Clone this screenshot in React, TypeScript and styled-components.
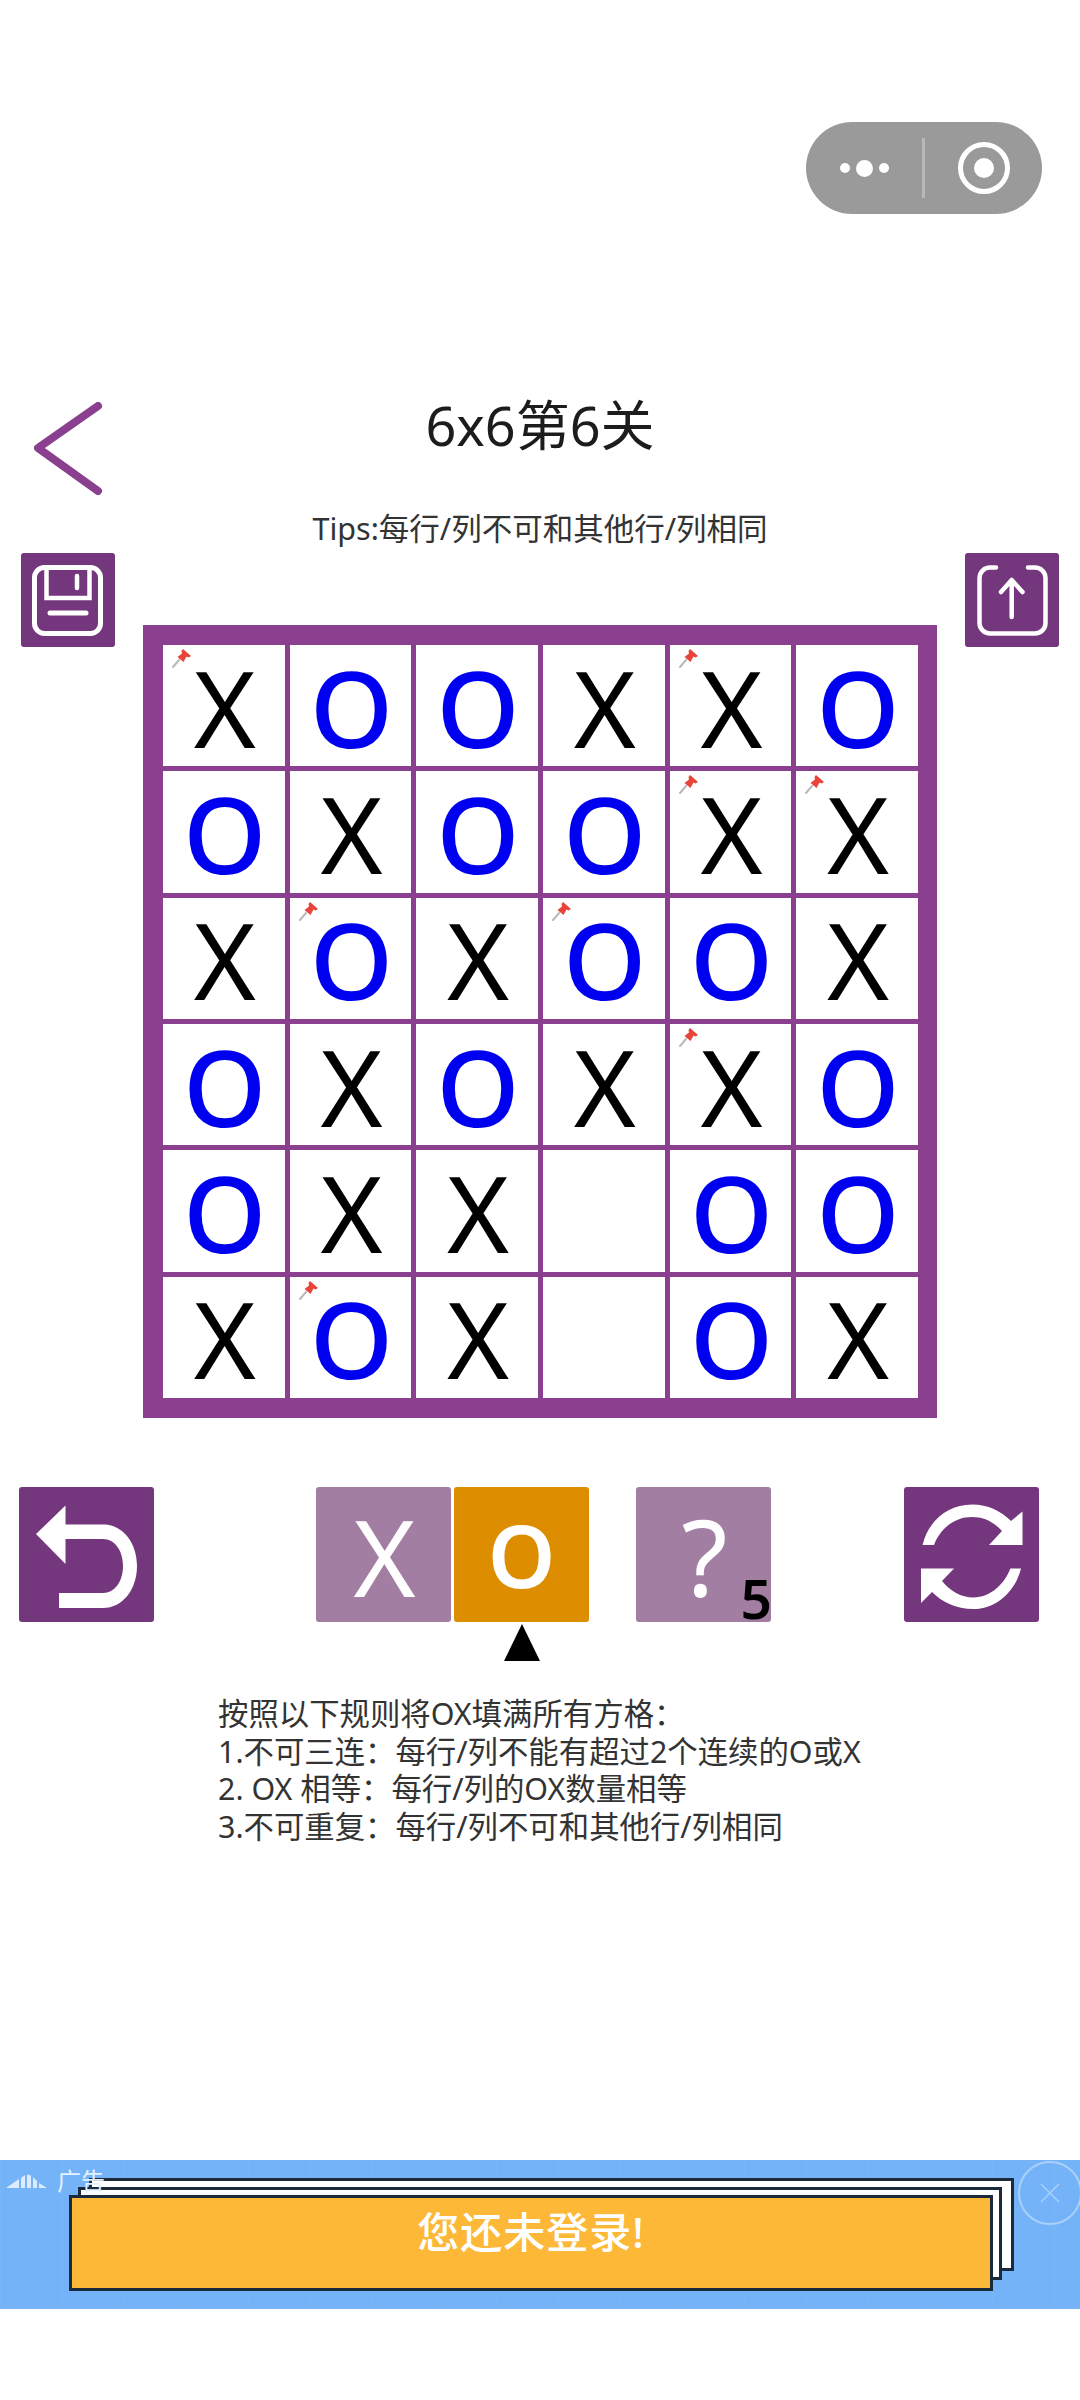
import React from "react";
import styled, { createGlobalStyle } from "styled-components";

const GlobalStyle = createGlobalStyle`
  html, body {
    margin: 0;
    padding: 0;
    background: #fff;
  }
  body {
    width: 1080px;
    height: 2400px;
    overflow: hidden;
    font-family: "Noto Sans", "Noto Sans CJK SC", sans-serif;
  }
`;

const CJK = `"Noto Sans", "Noto Sans CJK SC", sans-serif`;
const BUTTON_PURPLE = "#74367c";
const BOARD_PURPLE = "#8a3f8f";
const MUTED_PURPLE = "#a27ea2";

const Page = styled.div`
  width: 1080px;
  height: 2400px;
  display: flex;
  flex-direction: column;
  font-family: ${CJK};
`;

const TopBar = styled.div`
  height: 92px;
  padding: 122px 38px 0 0;
  display: flex;
  justify-content: flex-end;
`;

const Capsule = styled.div`
  width: 236px;
  height: 92px;
  border-radius: 46px;
  background: #9a9a9a;
  display: flex;
  align-items: center;
`;

const CapsuleDots = styled.div`
  width: 116px;
  display: flex;
  align-items: center;
  justify-content: center;
  gap: 6px;
`;

const Dot = styled.span<{ $size: number }>`
  width: ${(p) => p.$size}px;
  height: ${(p) => p.$size}px;
  border-radius: 50%;
  background: #fff;
`;

const CapsuleDivider = styled.div`
  width: 3px;
  height: 60px;
  background: #b9b9b9;
`;

const CapsuleTarget = styled.div`
  flex: 1;
  display: flex;
  align-items: center;
  justify-content: center;
`;

const Ring = styled.div`
  width: 42px;
  height: 42px;
  border: 5px solid #fff;
  border-radius: 50%;
  display: flex;
  align-items: center;
  justify-content: center;
`;

const RingCore = styled.div`
  width: 20px;
  height: 20px;
  border-radius: 50%;
  background: #fff;
`;

const Header = styled.div`
  margin-top: 174px;
  height: 120px;
  display: grid;
  grid-template-columns: 130px 1fr 130px;
`;

const BackButton = styled.div`
  padding: 14px 0 0 30px;
`;

const Title = styled.h1`
  margin: 0;
  height: 78px;
  line-height: 74px;
  font-size: 54px;
  font-weight: 400;
  text-align: center;
  color: #1c1c1c;
`;

const Tips = styled.div`
  height: 40px;
  line-height: 40px;
  font-size: 30.5px;
  text-align: center;
  color: #333;
`;

const BoardRow = styled.div`
  margin-top: 5px;
  padding: 0 21px;
  display: flex;
  justify-content: space-between;
  align-items: flex-start;
`;

const SquareButton = styled.div<{ $size?: number; $color?: string }>`
  width: ${(p) => p.$size ?? 135}px;
  height: ${(p) => p.$size ?? 135}px;
  flex: none;
  background: ${(p) => p.$color ?? BUTTON_PURPLE};
  border-radius: 3px;
  display: flex;
  align-items: center;
  justify-content: center;
  position: relative;
  color: #fff;
  font-size: 106px;
  line-height: 1;
`;

const Board = styled.div`
  margin-top: 72px;
  width: 794px;
  height: 793px;
  box-sizing: border-box;
  padding: 20px 19px 20px 20px;
  background: ${BOARD_PURPLE};
  display: grid;
  grid-template-columns: repeat(6, 1fr);
  grid-template-rows: repeat(6, 1fr);
  gap: 5px;
`;

const Cell = styled.div<{ $mark: string }>`
  position: relative;
  background: #fff;
  display: flex;
  align-items: center;
  justify-content: center;
  font-size: 106px;
  line-height: 1;
  font-weight: ${(p) => (p.$mark === "O" ? 500 : 450)};
  color: ${(p) => (p.$mark === "O" ? "#0000f0" : "#000")};
`;

const Mark = styled.span`
  position: relative;
  top: 1px;
  left: 1px;
`;

const PinBadge = styled.svg`
  position: absolute;
  left: 9px;
  top: 3px;
  width: 20px;
  height: 20px;
`;

const Controls = styled.div`
  margin-top: 69px;
  padding: 0 41px 0 19px;
  display: flex;
`;

const ToolGroup = styled.div`
  margin: 0 auto 0 162px;
  display: flex;
`;

const ModeButton = styled(SquareButton)`
  margin-right: 3px;
`;

const HintButton = styled(SquareButton)`
  margin-left: 47px;
  font-weight: 450;
`;

const SelectedArrow = styled.div`
  position: absolute;
  left: 50%;
  top: 137px;
  transform: translateX(-50%);
  width: 0;
  height: 0;
  border-left: 18px solid transparent;
  border-right: 18px solid transparent;
  border-bottom: 37px solid #000;
`;

const SelectedMark = styled.span`
  font-size: 86px;
  font-weight: 600;
`;

const HintCount = styled.span`
  position: absolute;
  right: -1px;
  bottom: -3px;
  font-size: 55px;
  line-height: 1;
  font-weight: 600;
  color: #000;
`;

const Rules = styled.div`
  margin: 73px 0 0 218px;
  font-size: 30.4px;
  line-height: 37.5px;
  color: #333;
  white-space: pre;
`;

const Spacer = styled.div`
  flex: 1;
`;

const AdBanner = styled.div`
  height: 149px;
  margin-bottom: 91px;
  position: relative;
  background-color: #74b3f8;
  background-image: linear-gradient(to right, rgba(255, 255, 255, 0.04) 1px, transparent 1px);
  background-size: 62px 100%;
`;

const AdLabel = styled.div`
  position: absolute;
  left: 6px;
  top: 4px;
  display: flex;
  align-items: center;
  gap: 10px;
  font-size: 24px;
  line-height: 34px;
  color: #e6f1ff;
`;

const PaperLayer = styled.div<{ $left: number; $top: number; $right: number; $bottom: number }>`
  position: absolute;
  left: ${(p) => p.$left}px;
  top: ${(p) => p.$top}px;
  right: ${(p) => p.$right}px;
  bottom: ${(p) => p.$bottom}px;
  box-sizing: border-box;
  background: #fff;
  border: 3px solid #1c2b3c;
`;

const LoginCard = styled.div`
  position: absolute;
  left: 69px;
  top: 35px;
  right: 87px;
  bottom: 18px;
  box-sizing: border-box;
  padding-bottom: 28px;
  background: #feb838;
  border: 3px solid #1c2b3c;
  display: flex;
  align-items: center;
  justify-content: center;
  font-size: 42px;
  font-weight: 500;
  letter-spacing: 1px;
  color: #fff;
`;

const CloseCircle = styled.div`
  position: absolute;
  right: -2px;
  top: 1px;
  width: 60px;
  height: 60px;
  border: 2px solid #a9d0fb;
  border-radius: 50%;
  display: flex;
  align-items: center;
  justify-content: center;
`;

const BOARD = ["XOOXXO", "OXOOXX", "XOXOOX", "OXOXXO", "OXX OO", "XOX OX"];
const PINNED = new Set(["0-0", "0-4", "1-4", "1-5", "2-1", "2-3", "3-4", "5-1"]);

const PinIcon = () => (
  <PinBadge viewBox="0 0 20 20">
    <path d="M1 19 L7 12" stroke="#b9b9b9" strokeWidth="2" strokeLinecap="round" />
    <path d="M11 1 L19 8 L16.5 9.5 L14.5 8.5 L11.5 14 L5.5 9 L10 5.5 L9.5 3 Z" fill="#e8443a" />
  </PinBadge>
);

const RULES = `按照以下规则将OX填满所有方格：
1.不可三连：每行/列不能有超过2个连续的O或X
2. OX 相等：每行/列的OX数量相等
3.不可重复：每行/列不可和其他行/列相同`;

export default function App() {
  return (
    <Page>
      <GlobalStyle />
      <TopBar>
        <Capsule>
          <CapsuleDots>
            <Dot $size={10} />
            <Dot $size={17} />
            <Dot $size={10} />
          </CapsuleDots>
          <CapsuleDivider />
          <CapsuleTarget>
            <Ring>
              <RingCore />
            </Ring>
          </CapsuleTarget>
        </Capsule>
      </TopBar>

      <Header>
        <BackButton>
          <svg width="76" height="96" viewBox="0 0 76 96">
            <path
              d="M68 4 L8 46 L68 89"
              fill="none"
              stroke={BOARD_PURPLE}
              strokeWidth="8"
              strokeLinecap="round"
              strokeLinejoin="round"
            />
          </svg>
        </BackButton>
        <Title>6x6第6关</Title>
        <div />
      </Header>
      <Tips>Tips:每行/列不可和其他行/列相同</Tips>

      <BoardRow>
        <SquareButton $size={94}>
          <svg width="94" height="94" viewBox="0 0 94 94" fill="none" stroke="#fff" strokeWidth="5">
            <rect x="13.5" y="14.5" width="66" height="66" rx="10" />
            <path d="M25.5 14.5 V45 H68.5 V14.5" strokeWidth="4.5" />
            <path d="M56 23 V35" strokeWidth="4.5" strokeLinecap="round" />
            <path d="M29 60 H65" strokeLinecap="round" />
          </svg>
        </SquareButton>

        <Board>
          {BOARD.flatMap((row, r) =>
            row.split("").map((mark, c) => (
              <Cell key={`${r}-${c}`} $mark={mark}>
                {PINNED.has(`${r}-${c}`) && <PinIcon />}
                {mark !== " " && <Mark>{mark}</Mark>}
              </Cell>
            ))
          )}
        </Board>

        <SquareButton $size={94}>
          <svg width="94" height="94" viewBox="0 0 94 94" fill="none" stroke="#fff" strokeWidth="4.5" strokeLinecap="round" strokeLinejoin="round">
            <path d="M31 14.5 H25 A10.5 10.5 0 0 0 14.5 25 V70 A10.5 10.5 0 0 0 25 80.5 H70 A10.5 10.5 0 0 0 80.5 70 V25 A10.5 10.5 0 0 0 70 14.5 H63" />
            <path d="M46.7 64 V27 M36 39 L46.7 27 L57.5 39" />
          </svg>
        </SquareButton>
      </BoardRow>

      <Controls>
        <SquareButton>
          <svg width="135" height="135" viewBox="0 0 135 135">
            <path
              d="M17 47 L46.5 18.6 V37.6 H84 C104 37.6 118 56 118 79 C118 102 104 121 84 121 H40 V106 H84 C96 106 104 94 104 79 C104 64 96 52 84 52 H46.5 V77 Z"
              fill="#fff"
            />
          </svg>
        </SquareButton>

        <ToolGroup>
          <ModeButton $color={MUTED_PURPLE}>
            <Mark>X</Mark>
          </ModeButton>
          <SquareButton $color="#dd8e00">
            <SelectedMark>O</SelectedMark>
            <SelectedArrow />
          </SquareButton>
          <HintButton $color={MUTED_PURPLE}>
            <Mark>?</Mark>
            <HintCount>5</HintCount>
          </HintButton>
        </ToolGroup>

        <SquareButton>
          <svg width="135" height="135" viewBox="0 0 135 135" fill="#fff">
            <path d="M18.6 58 C24 34 44 17.5 68 17.5 C84 17.5 97 24 107 34 L118.5 24.5 V58 H85 L98 44 C90 35 80 30 68 30 C50 30 36 42 30 58 Z" />
            <path d="M117 81.6 C111 105 92 122 69.5 122 C52 122 38 115 28 105 L17 116 V81.6 H50 L38 94 C46 104 57 110.5 69.5 110.5 C86 110.5 100 98 106.4 81.6 Z" />
          </svg>
        </SquareButton>
      </Controls>

      <Rules>{RULES}</Rules>

      <Spacer />

      <AdBanner>
        <PaperLayer $left={89} $top={18} $right={66} $bottom={38} />
        <PaperLayer $left={78} $top={27} $right={78} $bottom={29} />
        <LoginCard>您还未登录!</LoginCard>
        <AdLabel>
          <svg width="41" height="14" viewBox="0 0 41 14" fill="#dcebff">
            <path d="M0 14 L13 5 V14 Z M15 4 L19 1 V14 H15 Z M21 0.5 L25 1.5 V14 H21 Z M27 3 L31 7 V14 H27 Z M33 9 L41 14 H33 Z" />
          </svg>
          广告
        </AdLabel>
        <CloseCircle>
          <svg width="22" height="22" viewBox="0 0 22 22" stroke="#a9d0fb" strokeWidth="1.5">
            <path d="M2 2 L20 20 M20 2 L2 20" />
          </svg>
        </CloseCircle>
      </AdBanner>
    </Page>
  );
}
